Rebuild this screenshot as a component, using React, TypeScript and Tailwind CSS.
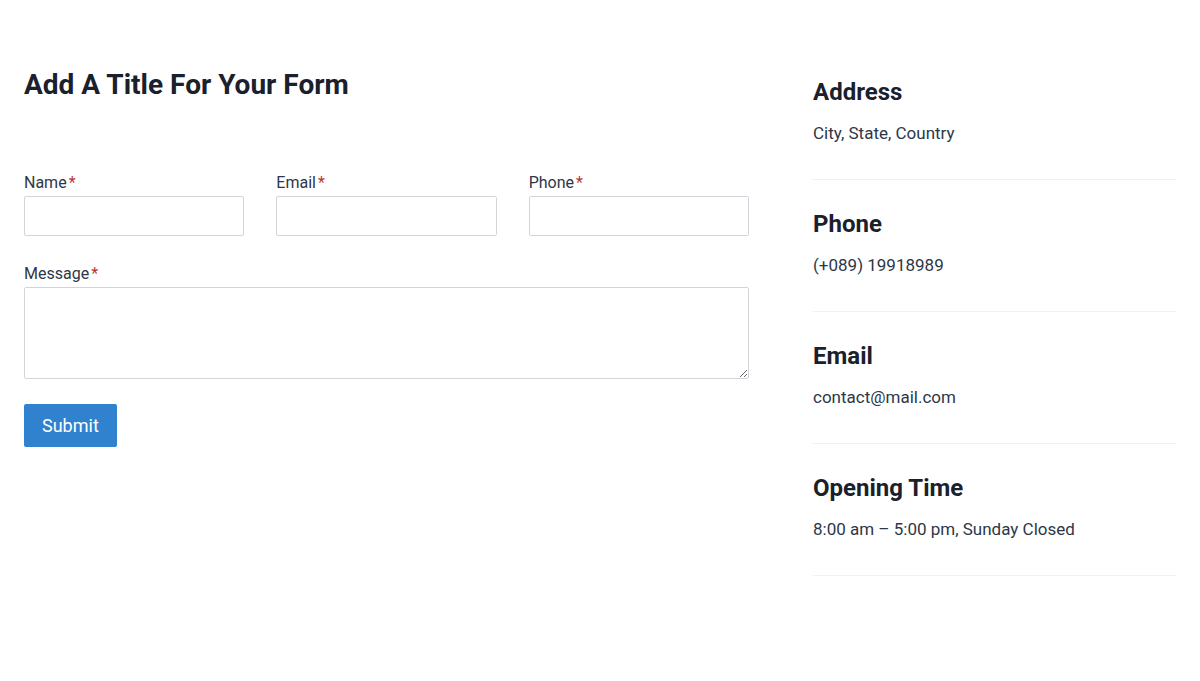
export default function App() {
  const fields = ["Name", "Email", "Phone"];
  const info = [
    { title: "Address", text: "City, State, Country" },
    { title: "Phone", text: "(+089) 19918989" },
    { title: "Email", text: "contact@mail.com" },
    { title: "Opening Time", text: "8:00 am – 5:00 pm, Sunday Closed" },
  ];

  return (
    <div className="min-h-screen w-full bg-white px-6 pt-12 font-['Roboto',sans-serif] text-[#2d3748]">
      <div className="flex gap-16">
        {/* form */}
        <div className="w-[725px] shrink-0">
          <h1 className="mt-[20px] text-[28px] font-bold leading-[1.2] text-[#1a202c]">
            Add A Title For Your Form
          </h1>

          <form className="mt-[69px]" onSubmit={(e) => e.preventDefault()}>
            <div className="grid grid-cols-3 gap-8">
              {fields.map((f) => (
                <div key={f}>
                  <label className="mb-px block text-base leading-6">
                    {f}
                    <span className="ml-[2px] text-[#c53030]">*</span>
                  </label>
                  <input
                    type="text"
                    className="block h-10 w-full rounded-[2px] border border-[#d2d5da] bg-white px-3 outline-none"
                  />
                </div>
              ))}
            </div>

            <div className="mt-[26px]">
              <label className="mb-px block text-base leading-6">
                Message<span className="ml-[2px] text-[#c53030]">*</span>
              </label>
              <textarea className="block h-[92px] w-full rounded-[2px] border border-[#d2d5da] bg-white px-3 py-2 outline-none" />
            </div>

            <button
              type="submit"
              className="mt-[25px] rounded-[2px] bg-[#3182ce] px-[18px] py-2 text-[18px] leading-[27px] text-white"
            >
              Submit
            </button>
          </form>
        </div>

        {/* contact info */}
        <div className="flex-1">
          {info.map((item) => (
            <div key={item.title} className="border-b border-[#edf2f7] pt-[30px] pb-[33px]">
              <h2 className="mb-[13px] text-[24px] font-bold leading-[29px] text-[#1a202c]">
                {item.title}
              </h2>
              <p className="text-[17px] leading-[26px]">{item.text}</p>
            </div>
          ))}
        </div>
      </div>
    </div>
  );
}
